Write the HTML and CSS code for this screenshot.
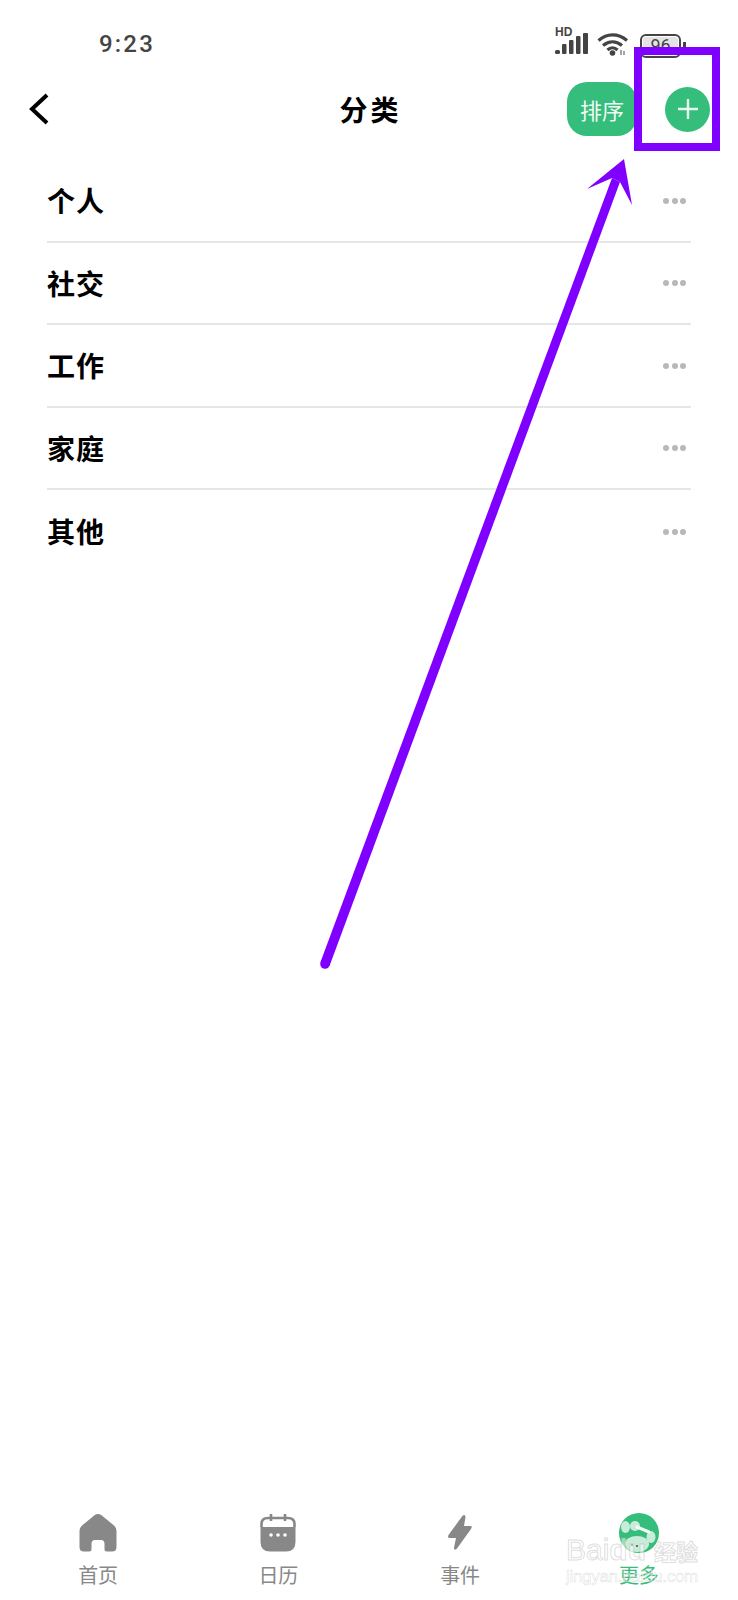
FILE: index.html
```html
<!DOCTYPE html>
<html lang="zh-CN">
<head>
  <meta charset="UTF-8">
  <meta name="viewport" content="width=device-width, initial-scale=1.0">
  <link rel="stylesheet" href="styles.css">
  <title>分类</title>
</head>
<body>
  <div class="phone">

    <div class="status">
      <span class="time">9:23</span>
      <div class="status-icons">
        <svg class="signal" width="34" height="30" viewBox="0 0 34 30">
          <text x="0" y="10" class="hd">HD</text>
          <rect x="0" y="24" width="5" height="4" rx="1.500"/>
          <rect x="7" y="18" width="4.500" height="10" rx="1"/>
          <rect x="14" y="14" width="4.500" height="14" rx="1"/>
          <rect x="21" y="10" width="4.500" height="18" rx="1"/>
          <rect x="28" y="7" width="5" height="21" rx="1"/>
        </svg>
        <svg class="wifi" width="32" height="24" viewBox="0 0 32 24">
          <path d="M1.500 8.500C10 1 21 1 30 8.500M6 13.500C12 8.500 19 8.500 25 13.500M10.500 18C13.500 15 17.500 15 20.500 18" fill="none" stroke="#444" stroke-width="3.200"/>
          <circle cx="15.500" cy="21" r="2.800" fill="#444"/>
          <path d="M24 18V23M27 19V23" stroke="#888" stroke-width="1.500"/>
        </svg>
        <div class="battery"><span>96</span></div>
      </div>
    </div>

    <div class="topbar">
      <svg class="back" width="22" height="34" viewBox="0 0 22 34">
        <path d="M19 3L4 17L19 31" fill="none" stroke="#000" stroke-width="4"/>
      </svg>
      <h1>分类</h1>
      <div class="actions">
        <button class="sort">排序</button>
        <div class="add">
          <svg width="22" height="22" viewBox="0 0 22 22">
            <path d="M11 1V21M1 11H21" stroke="#e8f8ef" stroke-width="2.400"/>
          </svg>
        </div>
      </div>
    </div>

    <ul class="list">
      <li><span>个人</span><i class="more"><b></b><b></b><b></b></i></li>
      <li><span>社交</span><i class="more"><b></b><b></b><b></b></i></li>
      <li><span>工作</span><i class="more"><b></b><b></b><b></b></i></li>
      <li><span>家庭</span><i class="more"><b></b><b></b><b></b></i></li>
      <li class="last"><span>其他</span><i class="more"><b></b><b></b><b></b></i></li>
    </ul>

    <div class="tabs">
      <div class="tab">
        <svg width="38" height="40" viewBox="0 0 38 40">
          <path d="M15.500 2.200Q19 -0.400 22.500 2.200L35 12.500Q37.500 14.600 37.500 18V34Q37.500 38.500 33 38.500H28Q25.500 38.500 25.500 36V31Q25.500 27 22 27H16Q12.500 27 12.500 31V36Q12.500 38.500 10 38.500H5Q0.500 38.500 0.500 34V18Q0.500 14.600 3 12.500Z" fill="#888"/>
        </svg>
        <span>首页</span>
      </div>
      <div class="tab">
        <svg width="36" height="40" viewBox="0 0 36 40">
          <path d="M11 1V8M25 1V8" stroke="#888" stroke-width="2.600"/>
          <path d="M1.500 14V11Q1.500 5 8 5H28Q34.500 5 34.500 11V14" fill="none" stroke="#888" stroke-width="2.600"/>
          <path d="M0.500 14H35.500V29Q35.500 38.500 26 38.500H10Q0.500 38.500 0.500 29Z" fill="#888"/>
          <circle cx="11" cy="22" r="1.800" fill="#fff"/>
          <circle cx="18" cy="22" r="1.800" fill="#fff"/>
          <circle cx="25" cy="22" r="1.800" fill="#fff"/>
        </svg>
        <span>日历</span>
      </div>
      <div class="tab">
        <svg width="26" height="40" viewBox="0 0 26 40">
          <path d="M15 3.500Q18 0.500 18.500 4L17 13H23Q26 13 24 16L10 35.500Q7 38.500 7 34.500L9 25H3Q0 25 1.500 22Z" fill="#888"/>
        </svg>
        <span>事件</span>
      </div>
      <div class="tab on">
        <svg width="40" height="40" viewBox="0 0 40 40">
          <circle cx="20" cy="20" r="20" fill="#35bd7b"/>
          <ellipse cx="6.500" cy="14" rx="4.500" ry="6" fill="#c9ecd9"/>
          <ellipse cx="16" cy="13" rx="5" ry="5" fill="#c9ecd9"/>
          <ellipse cx="32" cy="24" rx="4.500" ry="6" fill="#c9ecd9"/>
          <ellipse cx="18" cy="31" rx="12" ry="8" fill="#c9ecd9"/>
          <path d="M18 14L30 19" stroke="#f4fbf7" stroke-width="3" stroke-linecap="round"/>
          <circle cx="13" cy="32" r="1" fill="#444"/>
          <circle cx="18" cy="33" r="1" fill="#444"/>
        </svg>
        <span>更多</span>
      </div>
    </div>

    <!-- annotation drawn on top of the screenshot -->
    <div class="mark-box"></div>
    <svg class="mark-arrow" width="738" height="1000" viewBox="0 0 738 1000">
      <path d="M320.500 962L612 178L620 182L329.500 966Z" fill="#8000ff"/>
      <circle cx="325" cy="964" r="4.800" fill="#8000ff"/>
      <path d="M624 159L632 205L620 182L612 178L587 189Z" fill="#8000ff"/>
    </svg>

    <div class="watermark">
      <div class="wm-top"><span class="wm-logo">Bai<em>du</em></span><span class="wm-cn">经验</span></div>
      <div class="wm-url">jingyan.baidu.com</div>
    </div>

  </div>
</body>
</html>
```

FILE: styles.css
```css
* {
  box-sizing: border-box;
}

html, body {
  margin: 0;
  padding: 0;
  background: #fff;
}

body {
  font-family: "Noto Sans CJK SC", "Liberation Sans", sans-serif;
}

.phone {
  position: relative;
  width: 738px;
  height: 1600px;
  display: flex;
  flex-direction: column;
  overflow: hidden;
}

.status {
  height: 72px;
  padding: 26px 57px 0 99px;
  display: flex;
  justify-content: space-between;
  align-items: flex-start;
}

.time {
  margin-top: 4px;
  font-family: Roboto, sans-serif;
  font-size: 24px;
  font-weight: 500;
  line-height: 28px;
  letter-spacing: 2.200px;
  color: #444;
}

.status-icons {
  display: flex;
  align-items: flex-start;
  gap: 8px;
}

.signal rect {
  fill: #444;
}

.hd {
  font-family: "Liberation Sans", sans-serif;
  font-size: 12px;
  font-weight: bold;
  fill: #444;
}

.wifi {
  margin-top: 6px;
}

.battery {
  width: 41px;
  height: 24px;
  margin: 8px 0 0 3px;
  border: 2px solid #444;
  border-radius: 6px;
  text-align: center;
  position: relative;
}

.battery span {
  display: block;
  margin: 1px;
  font-family: Roboto, sans-serif;
  font-size: 18px;
  line-height: 18px;
  color: #444;
  background: #e4e4e4;
  border-radius: 3px;
}

.battery::after {
  content: "";
  position: absolute;
  right: -7px;
  top: 6px;
  width: 3px;
  height: 9px;
  background: #444;
}

.topbar {
  height: 74px;
  position: relative;
  display: flex;
  align-items: center;
  justify-content: space-between;
  padding: 0 28px 0 28px;
}

.topbar h1 {
  position: absolute;
  left: 0;
  right: 0;
  margin: 0;
  padding-left: 3px;
  text-align: center;
  font-size: 28px;
  font-weight: 700;
  letter-spacing: 3px;
  color: #000;
}

.actions {
  display: flex;
  align-items: center;
  gap: 28px;
  position: relative;
}

.sort {
  width: 70px;
  height: 54px;
  border: 0;
  padding: 0;
  border-radius: 20px;
  background: #35bd7b;
  color: #f0faf4;
  font-family: inherit;
  font-size: 22px;
}

.add {
  width: 45px;
  height: 45px;
  border-radius: 50%;
  background: #35bd7b;
  display: flex;
  align-items: center;
  justify-content: center;
}

.list {
  list-style: none;
  margin: 14px 47px 0;
  padding: 0;
}

.list li {
  height: 82.500px;
  display: flex;
  align-items: center;
  justify-content: space-between;
  border-bottom: 2px solid #e6e6e6;
  font-size: 28px;
  font-weight: 700;
  letter-spacing: 1px;
  color: #000;
}

.list li.last {
  border-bottom: 0;
}

.more {
  display: flex;
  gap: 2.500px;
  margin: 1px 5px 0 0;
}

.more b {
  width: 6px;
  height: 6px;
  border-radius: 50%;
  background: #b8b8b8;
}

.tabs {
  margin-top: auto;
  height: 87px;
  padding: 0 9px 0 8px;
  display: grid;
  grid-template-columns: repeat(4, 1fr);
}

.tab {
  display: flex;
  flex-direction: column;
  align-items: center;
  gap: 8px;
  font-size: 20px;
  line-height: 28px;
  color: #888;
}

.tab:nth-child(3) {
  padding-left: 3px;
}

.tab.on {
  color: #35bd7b;
}

.mark-box {
  position: absolute;
  left: 634px;
  top: 47px;
  width: 86px;
  height: 104px;
  border: 8.500px solid #8000ff;
}

.mark-arrow {
  position: absolute;
  left: 0;
  top: 0;
}

/* faint outlined stamp over the tab bar */
.watermark {
  position: absolute;
  left: 566px;
  top: 1534px;
  width: 132px;
  font-family: "Liberation Sans", sans-serif;
  color: rgba(255, 255, 255, 0.5);
  -webkit-text-stroke: 1px rgba(170, 170, 170, 0.4);
}

.wm-top {
  display: flex;
  justify-content: space-between;
  align-items: center;
  height: 32px;
  white-space: nowrap;
}

.wm-logo {
  font-size: 30px;
}

.wm-logo em {
  font-style: normal;
  font-weight: 700;
}

.wm-cn {
  font-family: "Noto Sans CJK SC", sans-serif;
  font-size: 22px;
  font-weight: 700;
}

.wm-url {
  margin-top: 1px;
  font-size: 17px;
  line-height: 20px;
  letter-spacing: -0.300px;
  white-space: nowrap;
  -webkit-text-stroke-width: 0.500px;
}
```
